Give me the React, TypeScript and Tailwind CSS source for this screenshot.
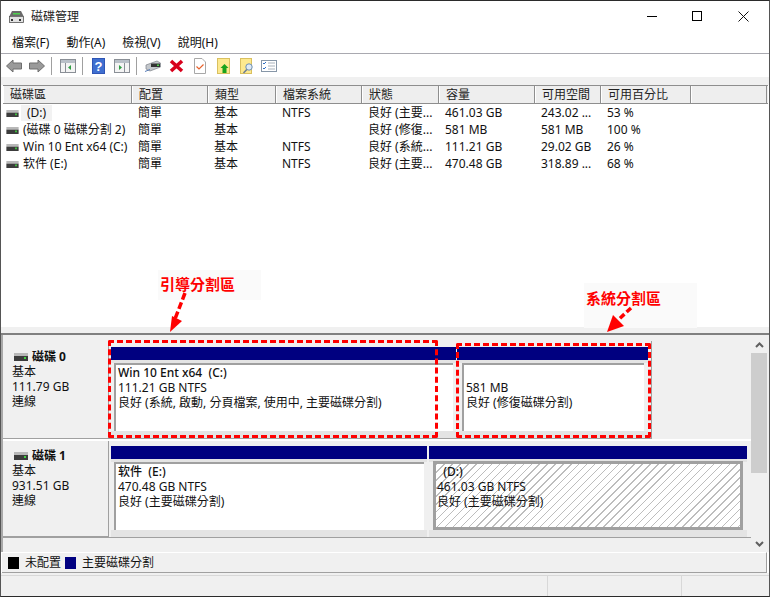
import React from 'react';

const columns = [
  { label: '磁碟區', w: 'w-[129px]' },
  { label: '配置', w: 'w-[76px]' },
  { label: '類型', w: 'w-[68px]' },
  { label: '檔案系統', w: 'w-[86px]' },
  { label: '狀態', w: 'w-[77px]' },
  { label: '容量', w: 'w-[96px]' },
  { label: '可用空間', w: 'w-[66px]' },
  { label: '可用百分比', w: 'w-[90px]' },
  { label: '', w: 'w-[76px]' },
];

const rows = [
  ['(D:)', '簡單', '基本', 'NTFS', '良好 (主要...', '461.03 GB', '243.02 ...', '53 %'],
  ['(磁碟 0 磁碟分割 2)', '簡單', '基本', '', '良好 (修復...', '581 MB', '581 MB', '100 %'],
  ['Win 10 Ent x64 (C:)', '簡單', '基本', 'NTFS', '良好 (系統...', '111.21 GB', '29.02 GB', '26 %'],
  ['软件 (E:)', '簡單', '基本', 'NTFS', '良好 (主要...', '470.48 GB', '318.89 ...', '68 %'],
];

function DiskGlyph({ className = '' }: { className?: string }) {
  return (
    <svg width="14" height="8" viewBox="0 0 14 8" className={className}>
      <rect x="0" y="0" width="14" height="3" fill="#b8b8b8" />
      <rect x="0" y="3" width="14" height="5" fill="#3c3c3c" />
      <rect x="10" y="4" width="2" height="2" fill="#3fd13f" />
    </svg>
  );
}

function Toolbar() {
  return (
    <div className="flex h-[23px] items-center pl-[5px]">
      <svg width="16" height="14" viewBox="0 0 16 14">
        <path d="M0.5 7 L7 1 V4 H15.5 V10 H7 V13 Z" fill="#9a9a9a" stroke="#6e6e6e" />
      </svg>
      <svg width="16" height="14" viewBox="0 0 16 14" className="ml-[7px]">
        <path d="M15.5 7 L9 1 V4 H0.5 V10 H9 V13 Z" fill="#9a9a9a" stroke="#6e6e6e" />
      </svg>
      <div className="ml-[6px] mr-[8px] h-[18px] w-px bg-[#a0a0a0]" />
      <svg width="16" height="14" viewBox="0 0 16 14">
        <rect x="0.5" y="0.5" width="15" height="13" fill="#f4f4f4" stroke="#8a8f96" />
        <rect x="1" y="1" width="14" height="3" fill="#b9c0c8" />
        <path d="M5.5 4 V13" stroke="#8a8f96" />
        <path d="M11 6 L8 8.5 L11 11 Z" fill="#2f9e44" />
      </svg>
      <div className="ml-[6px] mr-[9px] h-[18px] w-px bg-[#a0a0a0]" />
      <svg width="13" height="16" viewBox="0 0 13 16">
        <rect width="13" height="16" fill="#2f55b5" />
        <rect x="1" y="1" width="11" height="14" fill="#3f6fd0" />
        <text x="6.5" y="13" fontSize="13" fontWeight="700" fill="#fff" textAnchor="middle" fontFamily="Liberation Sans">?</text>
      </svg>
      <svg width="16" height="14" viewBox="0 0 16 14" className="ml-[9px]">
        <rect x="0.5" y="0.5" width="15" height="13" fill="#f4f4f4" stroke="#8a8f96" />
        <rect x="1" y="1" width="14" height="3" fill="#b9c0c8" />
        <path d="M10.5 4 V13" stroke="#8a8f96" />
        <path d="M5 6 L8 8.5 L5 11 Z" fill="#2f9e44" />
      </svg>
      <div className="ml-[6px] mr-[8px] h-[18px] w-px bg-[#a0a0a0]" />
      <svg width="16" height="12" viewBox="0 0 16 12">
        <path d="M1 5 L12 1 L15.5 3 V7 L5 11 L1 9 Z" fill="#c4c8cc" stroke="#7b8087" strokeWidth="0.7" />
        <rect x="6" y="3.5" width="9" height="3.5" fill="#333" />
        <rect x="12" y="4.5" width="2" height="1.5" fill="#4fd04f" />
        <path d="M0 11.5 L5 9.5" stroke="#5a7fb8" />
      </svg>
      <svg width="15" height="14" viewBox="0 0 15 14" className="ml-[8px]">
        <path d="M2 2 L13 12 M13 2 L2 12" stroke="#d8001c" strokeWidth="3.6" />
      </svg>
      <svg width="12" height="16" viewBox="0 0 12 16" className="ml-[10px]">
        <path d="M0.5 0.5 H8 L11.5 4 V15.5 H0.5 Z" fill="#fff" stroke="#a8a8a8" />
        <path d="M2.5 8.5 L5 11 L9.5 6.5" stroke="#e8622c" strokeWidth="1.2" fill="none" />
      </svg>
      <svg width="13" height="16" viewBox="0 0 13 16" className="ml-[11px]">
        <rect x="0.5" y="0.5" width="12" height="15" fill="#fde98f" stroke="#d9c060" />
        <path d="M7.5 6 L11.5 10 H9.5 V15 H5.5 V10 H3.5 Z" fill="#19a31c" />
      </svg>
      <svg width="14" height="16" viewBox="0 0 14 16" className="ml-[10px]">
        <rect x="0.5" y="0.5" width="11" height="15" fill="#fde98f" stroke="#d9c060" />
        <circle cx="9" cy="9" r="3.2" fill="#dfeaf5" stroke="#6d8fb3" />
        <path d="M6.8 11.5 L3.5 15" stroke="#6d7f94" strokeWidth="1.6" />
      </svg>
      <svg width="16" height="12" viewBox="0 0 16 12" className="ml-[7px]">
        <rect x="0.5" y="0.5" width="15" height="11" fill="#fff" stroke="#8797a8" />
        <path d="M2 3 L3 4 L5 2 M2 8 L3 9 L5 7" stroke="#2f6fc4" fill="none" />
        <path d="M7 3 H14 M7 6 H14 M7 9 H14" stroke="#a9b2bb" />
      </svg>
    </div>
  );
}

function DiskLabel({ name, size, padClass }: { name: string; size: string; padClass: string }) {
  return (
    <div className={`flex w-[106px] shrink-0 flex-col border-b border-r border-[#a0a0a0] bg-[#f0f0f0] pl-[9px] leading-[15px] ${padClass}`}>
      <div className="flex items-center">
        <DiskGlyph className="ml-[2px] mr-[4px]" />
        <span className="font-bold">{name}</span>
      </div>
      <div>基本</div>
      <div>{size}</div>
      <div>連線</div>
    </div>
  );
}

function Partition({
  lines,
  widthClass,
  boxClass = 'mx-[3px] bg-white border-t-2 border-l-2 border-[#a0a0a0] pl-[2px]',
}: {
  lines: React.ReactNode[];
  widthClass: string;
  boxClass?: string;
}) {
  return (
    <div className={`${widthClass} flex shrink-0 flex-col`}>
      <div className="h-[13px] bg-[#000080]" />
      <div className="h-[3px] bg-[#e4e4e4]" />
      <div className={`h-[68px] ${boxClass} leading-[15px]`}>
        {lines.map((line, i) => (
          <div key={i} className="whitespace-nowrap">
            {line}
          </div>
        ))}
      </div>
      <div className="flex-1 bg-[#e4e4e4]" />
    </div>
  );
}

export default function App() {
  return (
    <div
      className="relative flex h-[597px] w-[770px] flex-col overflow-hidden border-x border-y border-x-[#555] border-y-[#2b2b2b] bg-white text-[12px] text-[#111]"
      style={{ fontFamily: '"Noto Sans", "Noto Sans CJK TC", sans-serif' }}
    >
      {/* title bar */}
      <div className="flex h-[32px] shrink-0 items-center justify-between pb-[2px]">
        <div className="flex items-center pl-[8px] pt-[2px]">
          <svg width="15" height="15" viewBox="0 0 15 15">
            <path d="M3 1 H12 L14.5 6 H0.5 Z" fill="#6a6a6a" />
            <rect x="4" y="3" width="7" height="1.5" fill="#4fd04f" />
            <rect x="0.5" y="6.5" width="14" height="6" fill="#e2e2e2" stroke="#555" strokeWidth="0.8" />
            <rect x="2" y="9" width="2" height="2" fill="#333" />
            <rect x="10" y="9" width="2" height="2" fill="#333" />
          </svg>
          <span className="ml-[7px] text-[12px] text-[#222]">磁碟管理</span>
        </div>
        <div className="flex items-center pr-[3px]">
          <div className="flex h-[28px] w-[45px] items-center justify-center">
            <div className="h-px w-[10px] bg-black" />
          </div>
          <div className="flex h-[28px] w-[46px] items-center justify-center">
            <div className="h-[10px] w-[10px] border border-black" />
          </div>
          <div className="flex h-[28px] w-[46px] items-center justify-center">
            <svg width="11" height="11" viewBox="0 0 11 11">
              <path d="M0.5 0.5 L10.5 10.5 M10.5 0.5 L0.5 10.5" stroke="#111" />
            </svg>
          </div>
        </div>
      </div>

      {/* menu */}
      <div className="flex h-[20px] shrink-0 items-center gap-[17px] pl-[11px] leading-none">
        <span>檔案(F)</span>
        <span>動作(A)</span>
        <span>檢視(V)</span>
        <span>說明(H)</span>
      </div>
      <div className="h-px shrink-0 bg-[#a9a9b0]" />

      <Toolbar />
      <div className="h-[8px] shrink-0 bg-[#f0f0f0]" />

      {/* volume list */}
      <div className="ml-[2px] mr-[1px] flex h-[242px] shrink-0 flex-col bg-white">
        <div className="flex h-[19px] shrink-0 border-y border-[#8e8e8e] bg-[#eeeeee]">
          {columns.map((col, i) => (
            <div
              key={i}
              className={`${col.w} shrink-0 border-x border-r-[#8e8e8e] border-l-white pl-[6px] leading-[17px] text-[#222]`}
            >
              {col.label}
            </div>
          ))}
        </div>
        <div className="pt-[1px]">
          {rows.map((row, r) => (
            <div key={r} className="flex h-[16.9px] items-center leading-none">
              {row.map((cell, c) =>
                c === 0 ? (
                  <div key={c} className={`${columns[c].w} flex shrink-0 items-center whitespace-nowrap pl-[3px]`}>
                    <DiskGlyph className="mr-[2px] h-[7px] w-[13px] shrink-0" />
                    <span className={r === 0 ? 'bg-[#f2f2f2] px-[6px] py-[2px]' : 'pl-[2px]'}>{cell}</span>
                  </div>
                ) : (
                  <div key={c} className={`${columns[c].w} shrink-0 whitespace-nowrap pl-[6px]`}>
                    {cell}
                  </div>
                ),
              )}
            </div>
          ))}
        </div>
      </div>

      {/* splitter */}
      <div className="h-[6px] shrink-0 bg-[#f0f0f0]" />
      <div className="h-[2px] shrink-0 bg-[#808080]" />

      {/* disk map */}
      <div className="flex h-[217px] shrink-0 border-l-2 border-[#a8a8a8] bg-[#f0f0f0]">
        <div className="flex w-[748px] flex-col pt-[6px]">
          <div className="flex h-[98px] shrink-0">
            <DiskLabel name="磁碟 0" size="111.79 GB" padClass="pt-[8px]" />
            <div className="flex border-b border-r border-[#a0a0a0] pl-[2px] pr-[3px] pt-[6px]">
              <Partition
                widthClass="w-[345px] mr-px"
                lines={[
                  <span className="font-medium">Win 10 Ent x64&nbsp; (C:)</span>,
                  '111.21 GB NTFS',
                  '良好 (系統, 啟動, 分頁檔案, 使用中, 主要磁碟分割)',
                ]}
              />
              <Partition
                widthClass="w-[191px]"
                boxClass="ml-[5px] mr-[4px] bg-white border-t-2 border-l-2 border-[#a0a0a0] pl-[2px]"
                lines={[<span>&nbsp;</span>, '581 MB', '良好 (修復磁碟分割)']}
              />
            </div>
          </div>
          <div className="h-[2px] shrink-0 bg-white" />
          <div className="flex h-[97px] shrink-0 border-b border-[#a0a0a0]">
            <DiskLabel name="磁碟 1" size="931.51 GB" padClass="pt-[7px]" />
            <div className="flex pl-[2px] pt-[5px]">
              <Partition
                widthClass="w-[316px] mr-[2px]"
                lines={[<span className="font-medium">软件&nbsp; (E:)</span>, '470.48 GB NTFS', '良好 (主要磁碟分割)']}
              />
              <Partition
                widthClass="w-[318px]"
                boxClass="mx-[4px] -mt-px h-[69px] border-[3px] border-[#a0a0a0] pl-px bg-[repeating-linear-gradient(135deg,#bdbdbd_0,#bdbdbd_1px,#ffffff_1px,#ffffff_5.6px)]"
                lines={[<span className="font-medium">&nbsp;&nbsp;(D:)</span>, '461.03 GB NTFS', '良好 (主要磁碟分割)']}
              />
            </div>
          </div>
        </div>
        <div className="flex w-[16px] shrink-0 flex-col items-center bg-[#f0f0f0]">
          <div className="flex h-[18px] items-center justify-center pt-[2px]">
            <svg width="9" height="6" viewBox="0 0 9 6">
              <path d="M1 5 L4.5 1.5 L8 5" stroke="#606060" strokeWidth="2" fill="none" />
            </svg>
          </div>
          <div className="h-[120px] w-full bg-[#cdcdcd]" />
          <div className="flex-1" />
          <div className="flex h-[16px] items-center justify-center">
            <svg width="9" height="6" viewBox="0 0 9 6">
              <path d="M1 1 L4.5 4.5 L8 1" stroke="#606060" strokeWidth="2" fill="none" />
            </svg>
          </div>
        </div>
      </div>

      {/* legend */}
      <div className="ml-px mr-[2px] flex h-[21px] shrink-0 items-center border-b border-r border-t border-[#a0a0a0] border-t-white bg-[#f0f0f0] pl-[6px]">
        <div className="h-[12px] w-[11px] bg-black" />
        <span className="ml-[6px]">未配置</span>
        <div className="ml-[4px] h-[12px] w-[11px] bg-[#000080]" />
        <span className="ml-[6px]">主要磁碟分割</span>
      </div>
      <div className="h-[2px] shrink-0 bg-[#f0f0f0]" />

      {/* status bar */}
      <div className="flex flex-1 border-t border-[#d8d8d8] bg-[#f0f0f0]">
        <div className="w-[547px] border-r border-[#d8d8d8]" />
        <div className="w-[134px] border-r border-[#d8d8d8]" />
      </div>

      {/* annotations */}
      <div className="absolute left-[157px] top-[269px] h-[30px] w-[103px] bg-[#fafafa]" />
      <div className="absolute left-[583px] top-[282px] h-[45px] w-[113px] bg-[#fafafa]" />
      <div className="absolute left-[159px] top-[274px] text-[15px] font-bold leading-[18px] text-[#f00]">引導分割區</div>
      <div className="absolute left-[585px] top-[288px] text-[15px] font-bold leading-[18px] text-[#f00]">系統分割區</div>
      <svg className="absolute left-0 top-0" width="770" height="597" viewBox="0 0 770 597">
        <path d="M184 292 L174 318" stroke="#f00" strokeWidth="3.5" strokeDasharray="7 3" fill="none" />
        <path d="M169 331 L171 315 L181 320 Z" fill="#f00" />
        <path d="M630 307 L617 319" stroke="#f00" strokeWidth="3.5" strokeDasharray="6 3" fill="none" />
        <path d="M606 331 L612 314 L623 325 Z" fill="#f00" />
      </svg>
      <div className="absolute left-[107px] top-[339px] h-[98px] w-[330px] rounded-[2px] border-[3px] border-dashed border-[#f00]" />
      <div className="absolute left-[455px] top-[342px] h-[95px] w-[195px] rounded-[2px] border-[3px] border-dashed border-[#f00]" />
    </div>
  );
}
